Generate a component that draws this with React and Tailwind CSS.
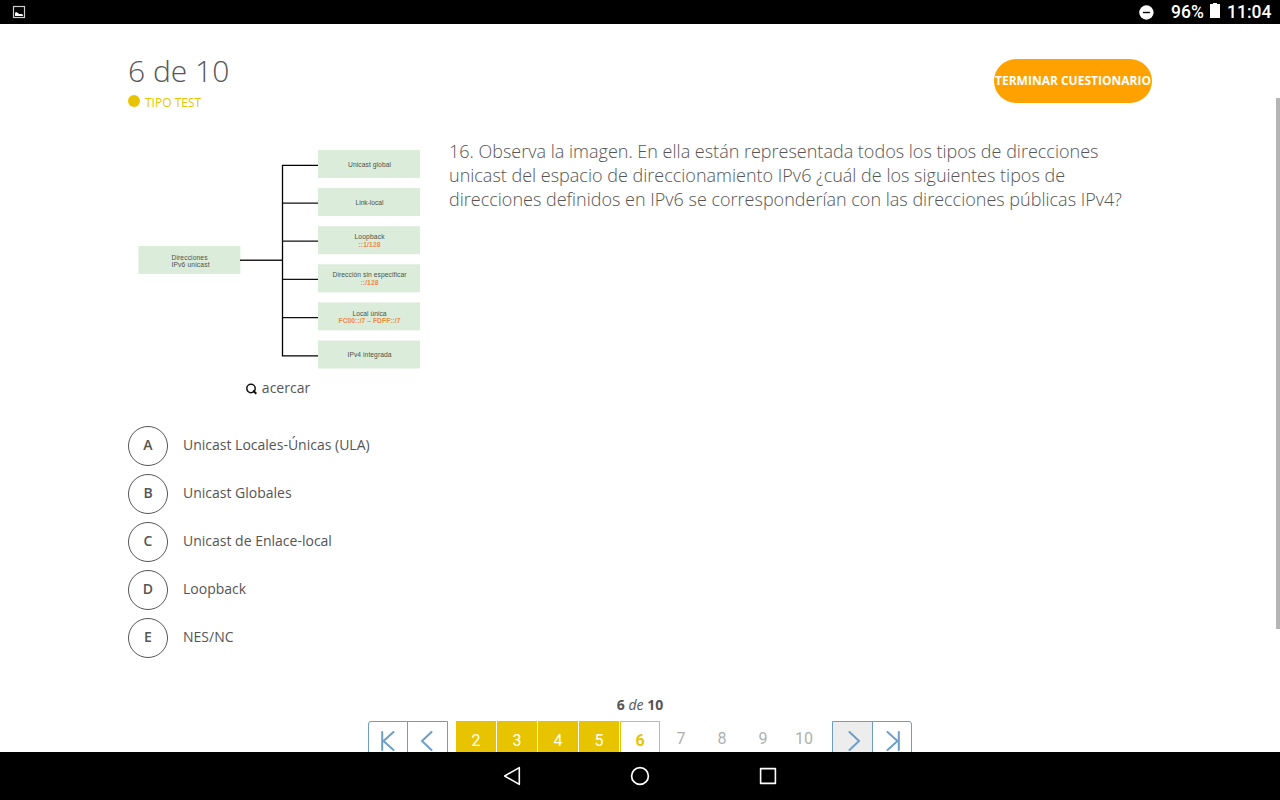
import React from 'react';

const answers = [
  ['A', 'Unicast Locales-Únicas (ULA)'],
  ['B', 'Unicast Globales'],
  ['C', 'Unicast de Enlace-local'],
  ['D', 'Loopback'],
  ['E', 'NES/NC'],
];

const addressTypes = [
  { label: 'Unicast global', width: 43 },
  { label: 'Link-local', width: 28 },
  { label: 'Loopback', width: 30, note: '::1/128', noteWidth: 22 },
  { label: 'Dirección sin especificar', width: 74, note: '::/128', noteWidth: 18 },
  { label: 'Local única', width: 34, note: 'FC00::/7 – FDFF::/7', noteWidth: 62 },
  { label: 'IPv4 integrada', width: 44 },
];

function StatusBar() {
  return (
    <header className="flex h-6 shrink-0 items-center bg-black pr-2 pl-3 font-['Roboto',sans-serif] text-[17.5px] leading-6 font-medium text-white">
      <svg width="14" height="14" viewBox="0 0 14 14">
        <rect x="1.500" y="1.500" width="11" height="11" fill="none" stroke="#ccc" strokeWidth="1.200" />
        <path d="M3 11V8l1-1 2 1 1 1h3l1 1v1z" fill="#fff" />
      </svg>
      <svg className="ml-auto" width="16" height="16" viewBox="0 0 16 16">
        <circle cx="8.400" cy="8.5" r="7.2" fill="#fff" />
        <path d="M4.9 8.5h7" stroke="#000" strokeWidth="1.4" />
      </svg>
      <span className="ml-[17px] w-[33px] whitespace-nowrap">96%</span>
      <svg className="mb-[3px] ml-1.5" width="10" height="15" viewBox="0 0 10 15">
        <path d="M0 1h3V0h4v1h3v14H0z" fill="#fff" />
      </svg>
      <span className="ml-[7px] w-[45px] whitespace-nowrap">11:04</span>
    </header>
  );
}

function AddressDiagram() {
  return (
    <svg
      className="block font-['Liberation_Sans',Arial,sans-serif]"
      width="302"
      height="230"
      viewBox="0 0 302 230"
      fontSize="6.7"
      fill="#4b534b"
      textAnchor="middle"
    >
      <rect x="10.4" y="106" width="102" height="28" fill="#dbecdb" />
      <text x="43.5" y="119.6" textAnchor="start" textLength="36">Direcciones</text>
      <text x="43.5" y="127" textAnchor="start" textLength="38">IPv6 unicast</text>
      <path d="M112 120.2h42.5" stroke="#222" strokeWidth="1.5" />
      <path d="M190 25.4h-35.5v190.4H190" fill="none" stroke="#000" strokeWidth="1.3" />
      <path d="M154.5 63h35.5M154.5 101.1h35.5M154.5 139.3h35.5M154.5 177.5h35.5" stroke="#111" strokeWidth="1.25" />
      {addressTypes.map((type, i) => (
        <g key={type.label} transform={`translate(190 ${10 + i * 38.1})`}>
          <rect width="102" height="28" fill="#dbecdb" />
          <text x="51.5" y={type.note ? 13.2 : 16.9} textLength={type.width}>{type.label}</text>
          {type.note && (
            <text x="51.5" y="20.7" fontWeight="bold" fill="#ee8a42" textLength={type.noteWidth}>{type.note}</text>
          )}
        </g>
      ))}
    </svg>
  );
}

function Arrow({ bar = false, flip = false }) {
  return (
    <svg
      className={flip ? 'rotate-180' : ''}
      width="14"
      height="20"
      viewBox="0 0 14 20"
      fill="none"
      stroke="#6b9fc9"
      strokeWidth="2"
      strokeLinecap="round"
    >
      {bar ? <path d="M1.2 1v18M12.500 1L2.500 10l10 9" /> : <path d="M11.500 1L2 10l9.500 9" />}
    </svg>
  );
}

function Pagination() {
  return (
    <nav className="mx-auto flex w-[544px] shrink-0 font-['Roboto',sans-serif]">
      <div className="flex h-10 w-20 rounded-l-[3px] border border-[#6b9fc9]">
        <button className="flex w-[39px] items-center justify-center border-r border-[#6b9fc9]"><Arrow bar /></button>
        <button className="flex w-[38px] items-center justify-center"><Arrow /></button>
      </div>
      <div className="mx-2 flex gap-px text-base leading-[38px]">
        {[2, 3, 4, 5].map((n) => (
          <button key={n} className="h-10 w-10 bg-[#e8c400] text-white">{n}</button>
        ))}
        <button className="h-10 w-10 border border-[#e8c400] font-bold text-[#e8c400]">6</button>
        {[7, 8, 9, 10].map((n) => (
          <button key={n} className="h-9 w-10 leading-9 text-[#b0b0b0]">{n}</button>
        ))}
      </div>
      <div className="flex h-10 w-20 rounded-r-[3px] border border-[#6b9fc9]">
        <button className="flex w-10 items-center justify-center border-r border-[#6b9fc9] bg-[#ededed] pl-0.5"><Arrow flip /></button>
        <button className="flex flex-1 items-center justify-center pl-0.5"><Arrow bar flip /></button>
      </div>
    </nav>
  );
}

function NavigationBar() {
  return (
    <footer className="flex h-12 shrink-0 items-center justify-center gap-[108px] bg-black">
      <svg width="20" height="20" viewBox="0 0 20 20" fill="none" stroke="#fff" strokeWidth="1.6" strokeLinejoin="round">
        <path d="M17.300 1.600v16.800L2.700 10z" />
      </svg>
      <svg width="20" height="20" viewBox="0 0 20 20" fill="none" stroke="#fff" strokeWidth="1.7">
        <circle cx="10" cy="10" r="8.400" />
      </svg>
      <svg width="20" height="20" viewBox="0 0 20 20" fill="none" stroke="#fff" strokeWidth="1.6" strokeLinejoin="round">
        <rect x="2.600" y="2.600" width="14.800" height="14.800" />
      </svg>
    </footer>
  );
}

export default function App() {
  return (
    <div className="flex h-[800px] w-[1280px] flex-col overflow-hidden bg-white font-['Open_Sans',sans-serif] text-[#555]">
      <StatusBar />
      <div className="flex min-h-0 flex-1">
        <main className="flex flex-1 flex-col overflow-hidden pr-[124px] pl-32">
          <div className="flex h-[116px] shrink-0 items-start justify-between">
            <div>
              <h1 className="mt-[27px] text-[30px] leading-10 font-light">6 de 10</h1>
              <div className="mt-0.5 flex items-center gap-[5px] text-xs leading-5 text-[#e8c400]">
                <span className="mb-1 size-3 rounded-full bg-[#e8c400]" />
                TIPO TEST
              </div>
            </div>
            <button className="mt-[35px] flex h-11 w-[158px] items-center justify-center rounded-full bg-[#ffa200] text-xs font-bold whitespace-nowrap text-white">
              TERMINAR CUESTIONARIO
            </button>
          </div>
          <section className="flex h-[286px] shrink-0">
            <div className="w-[302px] shrink-0">
              <AddressDiagram />
              <div className="mt-[7px] flex items-center justify-center gap-[5px] pr-0.5 text-sm leading-[22px]">
                <svg className="mt-0.5" width="11" height="12" viewBox="0 0 11 12" fill="none" stroke="#111">
                  <circle cx="5" cy="5.500" r="4.200" strokeWidth="1.500" />
                  <path d="M7 7.500l3.300 3.300" strokeWidth="2" />
                </svg>
                acercar
              </div>
            </div>
            <p className="-mt-px ml-[19px] w-[690px] text-lg leading-6 font-light">
              16. Observa la imagen. En ella están representada todos los tipos de direcciones<br />
              unicast del espacio de direccionamiento IPv6 ¿cuál de los siguientes tipos de<br />
              direcciones definidos en IPv6 se corresponderían con las direcciones públicas IPv4?
            </p>
          </section>
          <ul className="flex shrink-0 flex-col gap-2">
            {answers.map(([letter, text]) => (
              <li key={letter} className="flex h-10 items-center gap-[15px] text-sm">
                <span className="flex size-10 items-center justify-center rounded-full border border-[#555] pb-[3px] font-semibold">{letter}</span>
                <span className="pb-[3px]">{text}</span>
              </li>
            ))}
          </ul>
          <p className="mt-9 mb-[5px] shrink-0 text-center text-sm leading-[22px]">
            <b>6</b> <i>de</i> <b>10</b>
          </p>
          <Pagination />
        </main>
        <div className="w-1 pt-[74px]">
          <div className="h-[531px] w-full bg-[#b5b5b5]" />
        </div>
      </div>
      <NavigationBar />
    </div>
  );
}
